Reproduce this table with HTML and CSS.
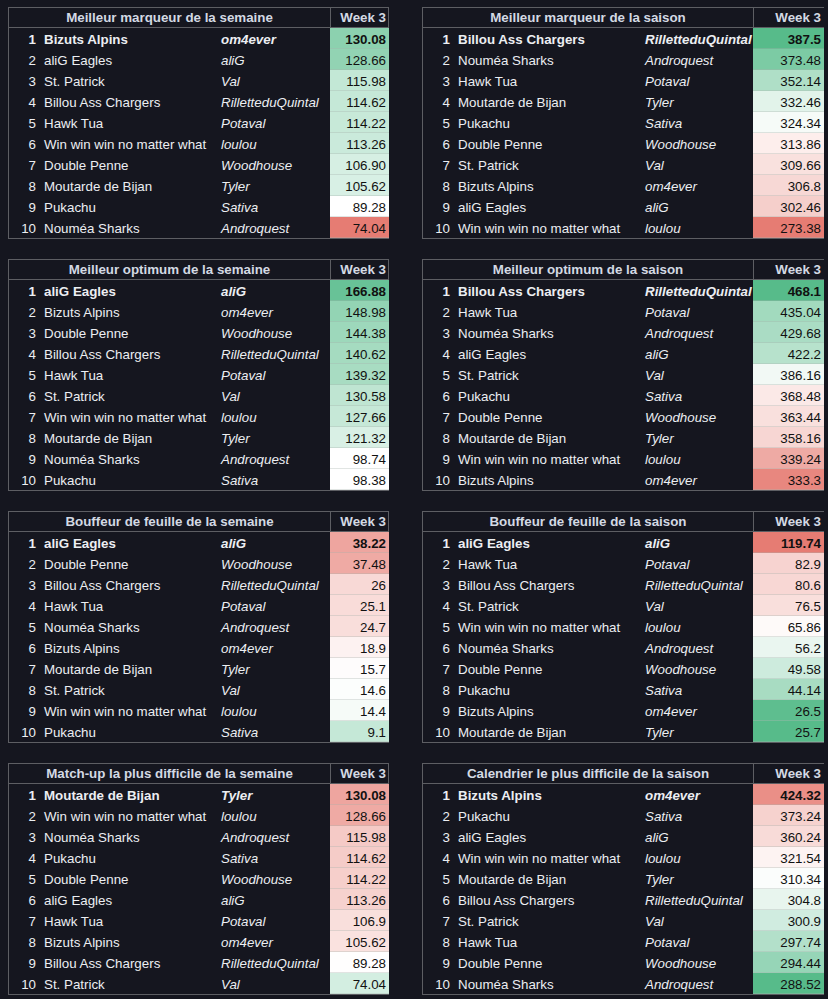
FILE: index.html
```html
<!DOCTYPE html>
<html lang="fr">
<head>
<meta charset="utf-8">
<title>Classements – Week 3</title>
<link rel="stylesheet" href="styles.css">
</head>
<body>
<main class="page">

  <section class="board board--left">
    <div class="board-head"><div class="board-title">Meilleur marqueur de la semaine</div><div class="board-week">Week 3</div></div>
    <div class="board-body">
      <div class="row row--top"><span class="rank">1</span><span class="team">Bizuts Alpins</span><span class="owner">om4ever</span><span class="score" style="background:#8cd1af">130.08</span></div>
      <div class="row"><span class="rank">2</span><span class="team">aliG Eagles</span><span class="owner">aliG</span><span class="score" style="background:#92d3b3">128.66</span></div>
      <div class="row"><span class="rank">3</span><span class="team">St. Patrick</span><span class="owner">Val</span><span class="score" style="background:#c3e8d6">115.98</span></div>
      <div class="row"><span class="rank">4</span><span class="team">Billou Ass Chargers</span><span class="owner">RilletteduQuintal</span><span class="score" style="background:#c5e8d7">114.62</span></div>
      <div class="row"><span class="rank">5</span><span class="team">Hawk Tua</span><span class="owner">Potaval</span><span class="score" style="background:#c7e9d8">114.22</span></div>
      <div class="row"><span class="rank">6</span><span class="team">Win win win no matter what</span><span class="owner">loulou</span><span class="score" style="background:#caeadb">113.26</span></div>
      <div class="row"><span class="rank">7</span><span class="team">Double Penne</span><span class="owner">Woodhouse</span><span class="score" style="background:#d6efe3">106.90</span></div>
      <div class="row"><span class="rank">8</span><span class="team">Moutarde de Bijan</span><span class="owner">Tyler</span><span class="score" style="background:#d8f0e5">105.62</span></div>
      <div class="row"><span class="rank">9</span><span class="team">Pukachu</span><span class="owner">Sativa</span><span class="score" style="background:#ffffff">89.28</span></div>
      <div class="row"><span class="rank">10</span><span class="team">Nouméa Sharks</span><span class="owner">Androquest</span><span class="score" style="background:#e67c73">74.04</span></div>
    </div>
  </section>

  <section class="board board--right">
    <div class="board-head"><div class="board-title">Meilleur marqueur de la saison</div><div class="board-week">Week 3</div></div>
    <div class="board-body">
      <div class="row row--top"><span class="rank">1</span><span class="team">Billou Ass Chargers</span><span class="owner">RilletteduQuintal</span><span class="score" style="background:#57bb8a">387.5</span></div>
      <div class="row"><span class="rank">2</span><span class="team">Nouméa Sharks</span><span class="owner">Androquest</span><span class="score" style="background:#7ccba4">373.48</span></div>
      <div class="row"><span class="rank">3</span><span class="team">Hawk Tua</span><span class="owner">Potaval</span><span class="score" style="background:#afdfc7">352.14</span></div>
      <div class="row"><span class="rank">4</span><span class="team">Moutarde de Bijan</span><span class="owner">Tyler</span><span class="score" style="background:#e2f3ea">332.46</span></div>
      <div class="row"><span class="rank">5</span><span class="team">Pukachu</span><span class="owner">Sativa</span><span class="score" style="background:#f6fbf8">324.34</span></div>
      <div class="row"><span class="rank">6</span><span class="team">Double Penne</span><span class="owner">Woodhouse</span><span class="score" style="background:#fdeeec">313.86</span></div>
      <div class="row"><span class="rank">7</span><span class="team">St. Patrick</span><span class="owner">Val</span><span class="score" style="background:#f9e1de">309.66</span></div>
      <div class="row"><span class="rank">8</span><span class="team">Bizuts Alpins</span><span class="owner">om4ever</span><span class="score" style="background:#f7d8d5">306.8</span></div>
      <div class="row"><span class="rank">9</span><span class="team">aliG Eagles</span><span class="owner">aliG</span><span class="score" style="background:#f5cfcb">302.46</span></div>
      <div class="row"><span class="rank">10</span><span class="team">Win win win no matter what</span><span class="owner">loulou</span><span class="score" style="background:#e67c73">273.38</span></div>
    </div>
  </section>

  <section class="board board--left">
    <div class="board-head"><div class="board-title">Meilleur optimum de la semaine</div><div class="board-week">Week 3</div></div>
    <div class="board-body">
      <div class="row row--top"><span class="rank">1</span><span class="team">aliG Eagles</span><span class="owner">aliG</span><span class="score" style="background:#68c297">166.88</span></div>
      <div class="row"><span class="rank">2</span><span class="team">Bizuts Alpins</span><span class="owner">om4ever</span><span class="score" style="background:#93d4b4">148.98</span></div>
      <div class="row"><span class="rank">3</span><span class="team">Double Penne</span><span class="owner">Woodhouse</span><span class="score" style="background:#9dd8bb">144.38</span></div>
      <div class="row"><span class="rank">4</span><span class="team">Billou Ass Chargers</span><span class="owner">RilletteduQuintal</span><span class="score" style="background:#a5dbc0">140.62</span></div>
      <div class="row"><span class="rank">5</span><span class="team">Hawk Tua</span><span class="owner">Potaval</span><span class="score" style="background:#a8dcc2">139.32</span></div>
      <div class="row"><span class="rank">6</span><span class="team">St. Patrick</span><span class="owner">Val</span><span class="score" style="background:#bfe5d2">130.58</span></div>
      <div class="row"><span class="rank">7</span><span class="team">Win win win no matter what</span><span class="owner">loulou</span><span class="score" style="background:#c6e8d7">127.66</span></div>
      <div class="row"><span class="rank">8</span><span class="team">Moutarde de Bijan</span><span class="owner">Tyler</span><span class="score" style="background:#d9f0e5">121.32</span></div>
      <div class="row"><span class="rank">9</span><span class="team">Nouméa Sharks</span><span class="owner">Androquest</span><span class="score" style="background:#ffffff">98.74</span></div>
      <div class="row"><span class="rank">10</span><span class="team">Pukachu</span><span class="owner">Sativa</span><span class="score" style="background:#ffffff">98.38</span></div>
    </div>
  </section>

  <section class="board board--right">
    <div class="board-head"><div class="board-title">Meilleur optimum de la saison</div><div class="board-week">Week 3</div></div>
    <div class="board-body">
      <div class="row row--top"><span class="rank">1</span><span class="team">Billou Ass Chargers</span><span class="owner">RilletteduQuintal</span><span class="score" style="background:#57bb8a">468.1</span></div>
      <div class="row"><span class="rank">2</span><span class="team">Hawk Tua</span><span class="owner">Potaval</span><span class="score" style="background:#a2dabe">435.04</span></div>
      <div class="row"><span class="rank">3</span><span class="team">Nouméa Sharks</span><span class="owner">Androquest</span><span class="score" style="background:#aadcc4">429.68</span></div>
      <div class="row"><span class="rank">4</span><span class="team">aliG Eagles</span><span class="owner">aliG</span><span class="score" style="background:#b7e2cc">422.2</span></div>
      <div class="row"><span class="rank">5</span><span class="team">St. Patrick</span><span class="owner">Val</span><span class="score" style="background:#f2f9f5">386.16</span></div>
      <div class="row"><span class="rank">6</span><span class="team">Pukachu</span><span class="owner">Sativa</span><span class="score" style="background:#fbe9e7">368.48</span></div>
      <div class="row"><span class="rank">7</span><span class="team">Double Penne</span><span class="owner">Woodhouse</span><span class="score" style="background:#f9e0dd">363.44</span></div>
      <div class="row"><span class="rank">8</span><span class="team">Moutarde de Bijan</span><span class="owner">Tyler</span><span class="score" style="background:#f7d6d3">358.16</span></div>
      <div class="row"><span class="rank">9</span><span class="team">Win win win no matter what</span><span class="owner">loulou</span><span class="score" style="background:#eeaaa4">339.24</span></div>
      <div class="row"><span class="rank">10</span><span class="team">Bizuts Alpins</span><span class="owner">om4ever</span><span class="score" style="background:#e8877f">333.3</span></div>
    </div>
  </section>

  <section class="board board--left">
    <div class="board-head"><div class="board-title">Bouffeur de feuille de la semaine</div><div class="board-week">Week 3</div></div>
    <div class="board-body">
      <div class="row row--top"><span class="rank">1</span><span class="team">aliG Eagles</span><span class="owner">aliG</span><span class="score" style="background:#eea59f">38.22</span></div>
      <div class="row"><span class="rank">2</span><span class="team">Double Penne</span><span class="owner">Woodhouse</span><span class="score" style="background:#efaaa4">37.48</span></div>
      <div class="row"><span class="rank">3</span><span class="team">Billou Ass Chargers</span><span class="owner">RilletteduQuintal</span><span class="score" style="background:#f8d9d6">26</span></div>
      <div class="row"><span class="rank">4</span><span class="team">Hawk Tua</span><span class="owner">Potaval</span><span class="score" style="background:#f9dcd9">25.1</span></div>
      <div class="row"><span class="rank">5</span><span class="team">Nouméa Sharks</span><span class="owner">Androquest</span><span class="score" style="background:#f9dedb">24.7</span></div>
      <div class="row"><span class="rank">6</span><span class="team">Bizuts Alpins</span><span class="owner">om4ever</span><span class="score" style="background:#fdf2f1">18.9</span></div>
      <div class="row"><span class="rank">7</span><span class="team">Moutarde de Bijan</span><span class="owner">Tyler</span><span class="score" style="background:#fefcfc">15.7</span></div>
      <div class="row"><span class="rank">8</span><span class="team">St. Patrick</span><span class="owner">Val</span><span class="score" style="background:#fcfefd">14.6</span></div>
      <div class="row"><span class="rank">9</span><span class="team">Win win win no matter what</span><span class="owner">loulou</span><span class="score" style="background:#f6fbf8">14.4</span></div>
      <div class="row"><span class="rank">10</span><span class="team">Pukachu</span><span class="owner">Sativa</span><span class="score" style="background:#c5e8d7">9.1</span></div>
    </div>
  </section>

  <section class="board board--right">
    <div class="board-head"><div class="board-title">Bouffeur de feuille de la saison</div><div class="board-week">Week 3</div></div>
    <div class="board-body">
      <div class="row row--top"><span class="rank">1</span><span class="team">aliG Eagles</span><span class="owner">aliG</span><span class="score" style="background:#e67c73">119.74</span></div>
      <div class="row"><span class="rank">2</span><span class="team">Hawk Tua</span><span class="owner">Potaval</span><span class="score" style="background:#f7d3d0">82.9</span></div>
      <div class="row"><span class="rank">3</span><span class="team">Billou Ass Chargers</span><span class="owner">RilletteduQuintal</span><span class="score" style="background:#f8d7d4">80.6</span></div>
      <div class="row"><span class="rank">4</span><span class="team">St. Patrick</span><span class="owner">Val</span><span class="score" style="background:#f9dfdc">76.5</span></div>
      <div class="row"><span class="rank">5</span><span class="team">Win win win no matter what</span><span class="owner">loulou</span><span class="score" style="background:#fefaf9">65.86</span></div>
      <div class="row"><span class="rank">6</span><span class="team">Nouméa Sharks</span><span class="owner">Androquest</span><span class="score" style="background:#eaf6f0">56.2</span></div>
      <div class="row"><span class="rank">7</span><span class="team">Double Penne</span><span class="owner">Woodhouse</span><span class="score" style="background:#cdebdd">49.58</span></div>
      <div class="row"><span class="rank">8</span><span class="team">Pukachu</span><span class="owner">Sativa</span><span class="score" style="background:#a8dcc2">44.14</span></div>
      <div class="row"><span class="rank">9</span><span class="team">Bizuts Alpins</span><span class="owner">om4ever</span><span class="score" style="background:#5ebe8f">26.5</span></div>
      <div class="row"><span class="rank">10</span><span class="team">Moutarde de Bijan</span><span class="owner">Tyler</span><span class="score" style="background:#57bb8a">25.7</span></div>
    </div>
  </section>

  <section class="board board--left">
    <div class="board-head"><div class="board-title">Match-up la plus difficile de la semaine</div><div class="board-week">Week 3</div></div>
    <div class="board-body">
      <div class="row row--top"><span class="rank">1</span><span class="team">Moutarde de Bijan</span><span class="owner">Tyler</span><span class="score" style="background:#eea59f">130.08</span></div>
      <div class="row"><span class="rank">2</span><span class="team">Win win win no matter what</span><span class="owner">loulou</span><span class="score" style="background:#efaaa4">128.66</span></div>
      <div class="row"><span class="rank">3</span><span class="team">Nouméa Sharks</span><span class="owner">Androquest</span><span class="score" style="background:#f5cac6">115.98</span></div>
      <div class="row"><span class="rank">4</span><span class="team">Pukachu</span><span class="owner">Sativa</span><span class="score" style="background:#f5ccc8">114.62</span></div>
      <div class="row"><span class="rank">5</span><span class="team">Double Penne</span><span class="owner">Woodhouse</span><span class="score" style="background:#f6cfcb">114.22</span></div>
      <div class="row"><span class="rank">6</span><span class="team">aliG Eagles</span><span class="owner">aliG</span><span class="score" style="background:#f6d2ce">113.26</span></div>
      <div class="row"><span class="rank">7</span><span class="team">Hawk Tua</span><span class="owner">Potaval</span><span class="score" style="background:#f9dfdc">106.9</span></div>
      <div class="row"><span class="rank">8</span><span class="team">Bizuts Alpins</span><span class="owner">om4ever</span><span class="score" style="background:#fae2df">105.62</span></div>
      <div class="row"><span class="rank">9</span><span class="team">Billou Ass Chargers</span><span class="owner">RilletteduQuintal</span><span class="score" style="background:#fffefe">89.28</span></div>
      <div class="row"><span class="rank">10</span><span class="team">St. Patrick</span><span class="owner">Val</span><span class="score" style="background:#d3eee1">74.04</span></div>
    </div>
  </section>

  <section class="board board--right">
    <div class="board-head"><div class="board-title">Calendrier le plus difficile de la saison</div><div class="board-week">Week 3</div></div>
    <div class="board-body">
      <div class="row row--top"><span class="rank">1</span><span class="team">Bizuts Alpins</span><span class="owner">om4ever</span><span class="score" style="background:#ea8f87">424.32</span></div>
      <div class="row"><span class="rank">2</span><span class="team">Pukachu</span><span class="owner">Sativa</span><span class="score" style="background:#f6d2ce">373.24</span></div>
      <div class="row"><span class="rank">3</span><span class="team">aliG Eagles</span><span class="owner">aliG</span><span class="score" style="background:#f8dbd8">360.24</span></div>
      <div class="row"><span class="rank">4</span><span class="team">Win win win no matter what</span><span class="owner">loulou</span><span class="score" style="background:#fdf3f2">321.54</span></div>
      <div class="row"><span class="rank">5</span><span class="team">Moutarde de Bijan</span><span class="owner">Tyler</span><span class="score" style="background:#fbfdfc">310.34</span></div>
      <div class="row"><span class="rank">6</span><span class="team">Billou Ass Chargers</span><span class="owner">RilletteduQuintal</span><span class="score" style="background:#e8f5ee">304.8</span></div>
      <div class="row"><span class="rank">7</span><span class="team">St. Patrick</span><span class="owner">Val</span><span class="score" style="background:#d0ece0">300.9</span></div>
      <div class="row"><span class="rank">8</span><span class="team">Hawk Tua</span><span class="owner">Potaval</span><span class="score" style="background:#b3e0ca">297.74</span></div>
      <div class="row"><span class="rank">9</span><span class="team">Double Penne</span><span class="owner">Woodhouse</span><span class="score" style="background:#96d5b7">294.44</span></div>
      <div class="row"><span class="rank">10</span><span class="team">Nouméa Sharks</span><span class="owner">Androquest</span><span class="score" style="background:#57bb8a">288.52</span></div>
    </div>
  </section>

</main>
</body>
</html>
```
FILE: styles.css
```css
* { box-sizing: border-box; }

html, body {
  margin: 0;
  padding: 0;
  background: #15161f;
}

body {
  font-family: "Liberation Sans", Arial, sans-serif;
  font-size: 13.33px;
  color: #eceef2;
  overflow: hidden;
}

.page {
  display: grid;
  grid-template-columns: 381px 402px;
  column-gap: 33px;
  row-gap: 20px;
  padding: 7px 0 0 8px;
}

.board-head {
  display: flex;
  height: 21px;
  font-weight: bold;
  color: #d3d9e3;
}

.board-title {
  border: 1px solid #5d5e63;
  border-right: none;
  text-align: center;
  white-space: nowrap;
  padding-top: 1px;
  line-height: 18px;
}

.board-week {
  border: 1px solid #5d5e63;
  text-align: right;
  padding-right: 2px;
  padding-top: 1px;
  line-height: 18px;
}

.board--left .board-title { width: 322px; }
.board--left .board-week { width: 59px; }
.board--right .board-title { width: 331px; }
.board--right .board-week { width: 71px; border-right: none; padding-right: 3px; }

.board-body {
  border-left: 1px solid #5d5e63;
  border-bottom: 1px solid #5d5e63;
}

.row {
  display: grid;
  grid-template-rows: 21px;
  height: 21px;
  white-space: nowrap;
}

.row > span {
  padding-top: 2px;
  line-height: 19px;
}

.board--left .row { grid-template-columns: 31px 178px 112px 59px; }
.board--right .row { grid-template-columns: 31px 188px 111px 71px; }

.row--top { font-weight: bold; }

.rank {
  text-align: right;
  padding-right: 4px;
}

.team {
  padding-left: 4px;
  overflow: hidden;
}

.owner {
  padding-left: 3px;
  font-style: italic;
  overflow: hidden;
}

.score {
  text-align: right;
  padding-right: 3px;
  color: #111;
  box-shadow: inset 0 -1px 0 rgba(170, 180, 175, 0.35);
}
```
